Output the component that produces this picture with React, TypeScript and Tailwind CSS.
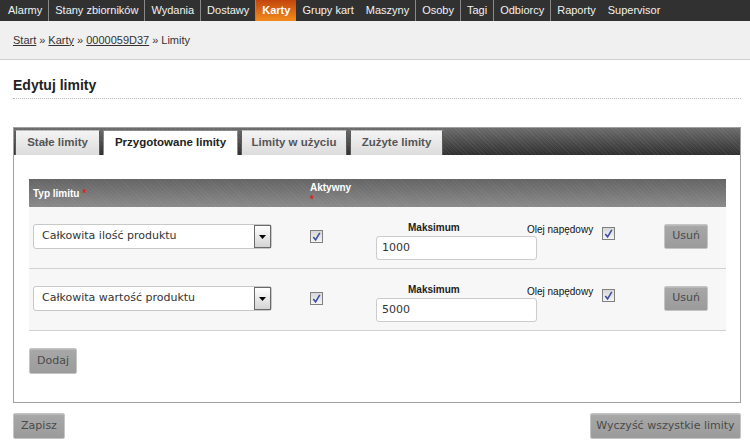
import React from "react";

const navItems: { label: string; sep: boolean; active?: boolean; first?: boolean }[] = [
  { label: "Alarmy", sep: true, first: true },
  { label: "Stany zbiorników", sep: true },
  { label: "Wydania", sep: true },
  { label: "Dostawy", sep: true },
  { label: "Karty", sep: false, active: true },
  { label: "Grupy kart", sep: false },
  { label: "Maszyny", sep: true },
  { label: "Osoby", sep: true },
  { label: "Tagi", sep: true },
  { label: "Odbiorcy", sep: true },
  { label: "Raporty", sep: false },
  { label: "Supervisor", sep: false },
];

function Checkbox() {
  return (
    <svg width="13" height="13" viewBox="0 0 13 13" className="block">
      <defs>
        <linearGradient id="cbg" x1="0" y1="0" x2="0" y2="1">
          <stop offset="0" stopColor="#d6d6d6" />
          <stop offset="1" stopColor="#f6f6f6" />
        </linearGradient>
      </defs>
      <rect x="0.5" y="0.5" width="12" height="12" fill="url(#cbg)" stroke="#808080" />
      <path d="M3.3 6.9 L5.6 9.8 L9.8 2.9" fill="none" stroke="#3a4fa6" strokeWidth="1.6" />
    </svg>
  );
}

function Select({ value }: { value: string }) {
  return (
    <div className="flex h-[25px] w-[239px] items-center rounded-[3px] border border-[#c8c8c8] bg-white">
      <span className="flex-1 pl-[8px] font-['DejaVu_Sans',sans-serif] text-[11px] text-[#333]">{value}</span>
      <div className="flex h-[23px] w-[17px] items-center justify-center border border-[#6a6a6a] bg-[linear-gradient(#ffffff,#d4d4d4)]">
        <svg width="7" height="4" viewBox="0 0 7 4" className="block">
          <path d="M0 0 H7 L3.5 4 Z" fill="#000" />
        </svg>
      </div>
    </div>
  );
}

const btn =
  "flex items-center justify-center rounded-[2px] border border-[#c4c4c4] bg-[linear-gradient(#a8a8a8,#9b9b9b)] font-['DejaVu_Sans',sans-serif] text-[11px] text-[#4a4a4a] shadow-[inset_0_1px_0_rgba(255,255,255,0.2)]";

function Row({ type, max }: { type: string; max: string }) {
  return (
    <div className="flex h-[62px] items-start border-b border-[#d2d2d2] bg-[#f7f7f7]">
      <div className="ml-[4px] mt-[17px]">
        <Select value={type} />
      </div>
      <div className="ml-[38px] mt-[23px]">
        <Checkbox />
      </div>
      <div className="ml-[53px] mt-[15px] flex w-[161px] flex-col">
        <div className="pl-[32px] text-[10px] font-bold leading-[12px] text-[#222]">Maksimum</div>
        <div className="mt-[2px] flex h-[24px] items-center rounded-[3px] border border-[#cccccc] bg-white pl-[5px] font-['DejaVu_Sans',sans-serif] text-[11px] text-[#333]">
          {max}
        </div>
      </div>
      <div className="-ml-[10px] mt-[17px] flex items-start">
        <span className="text-[10px] leading-[12px] text-[#111]">Olej napędowy</span>
        <div className="ml-[9px] mt-[3px]">
          <Checkbox />
        </div>
      </div>
      <div className={`ml-auto mr-[18px] mt-[17px] h-[25px] w-[44px] ${btn}`}>Usuń</div>
    </div>
  );
}

export default function App() {
  return (
    <div className="h-[442px] w-[750px] overflow-hidden bg-white font-['Liberation_Sans',Arial,sans-serif] text-[#333]">
      <nav className="flex h-[21px] bg-[#313131] text-[11px] text-[#f2f2f2]">
        {navItems.map((it) => (
          <div
            key={it.label}
            className={`flex items-center ${it.first ? "pl-[8px] pr-[6px]" : "px-[6px]"} ${
              it.sep ? "border-r border-[#8a8a8a]" : ""
            } ${it.active ? "bg-[linear-gradient(#c2460c,#f28b1d)] font-bold text-white" : ""}`}
          >
            {it.label}
          </div>
        ))}
      </nav>

      <div className="flex h-[39px] items-center border-b border-[#cfcfcf] bg-[#f0f0f0] px-[13px] text-[11px] text-[#333]">
        <span className="underline">Start</span>
        <span className="mx-[3px]">»</span>
        <span className="underline">Karty</span>
        <span className="mx-[3px]">»</span>
        <span className="underline">0000059D37</span>
        <span className="mx-[3px]">»</span>
        <span>Limity</span>
      </div>

      <h1 className="ml-[13px] mt-[17px] w-[728px] border-b border-dotted border-[#bbbbbb] pb-[4px] text-[14px] font-bold leading-[17px] text-[#222]">
        Edytuj limity
      </h1>

      <div className="ml-[13px] mt-[28px] w-[728px] border border-[#a0a0a0]">
        <div className="flex h-[27px] items-end gap-[3px] bg-[repeating-linear-gradient(45deg,rgba(255,255,255,0.05)_0px,rgba(255,255,255,0.05)_1px,transparent_1px,transparent_3px),linear-gradient(#6c6c6c,#2f2f2f)] pl-[1px]">
          <div className="flex h-[25px] w-[85px] items-center justify-center border-x border-t border-[#5a5a5a] border-t-[#bdbdbd] bg-[linear-gradient(#f4f4f4,#dcdcdc)] text-[11.5px] font-bold text-[#555]">
            Stałe limity
          </div>
          <div className="flex h-[25px] w-[135px] items-center justify-center border-x border-t border-[#8a8a8a] bg-white text-[11.5px] font-bold text-[#222]">
            Przygotowane limity
          </div>
          <div className="flex h-[25px] w-[106px] items-center justify-center border-x border-t border-[#5a5a5a] border-t-[#bdbdbd] bg-[linear-gradient(#f4f4f4,#dcdcdc)] text-[11.5px] font-bold text-[#555]">
            Limity w użyciu
          </div>
          <div className="flex h-[25px] w-[93px] items-center justify-center border-x border-t border-[#5a5a5a] border-t-[#bdbdbd] bg-[linear-gradient(#f4f4f4,#dcdcdc)] text-[11.5px] font-bold text-[#555]">
            Zużyte limity
          </div>
        </div>

        <div className="pb-[28px] pl-[15px] pr-[14px] pt-[24px]">
          <div className="flex h-[28px] bg-[repeating-linear-gradient(45deg,rgba(255,255,255,0.04)_0px,rgba(255,255,255,0.04)_1px,transparent_1px,transparent_3px),linear-gradient(#646464,#8a8a8a)] text-[10px] font-bold text-white">
            <div className="flex w-[281px] items-center pl-[4px]">
              Typ limitu <span className="ml-[3px] text-[#e02020]">*</span>
            </div>
            <div className="flex flex-col pt-[3px] leading-[12px]">
              <span>Aktywny</span>
              <span className="text-[#e02020]">*</span>
            </div>
          </div>
          <Row type="Całkowita ilość produktu" max="1000" />
          <Row type="Całkowita wartość produktu" max="5000" />
          <div className={`mt-[17px] h-[26px] w-[48px] ${btn}`}>Dodaj</div>
        </div>
      </div>

      <div className="mt-[10px] flex w-[741px] justify-between pl-[13px]">
        <div className={`h-[26px] w-[52px] ${btn}`}>Zapisz</div>
        <div className={`h-[26px] w-[151px] ${btn}`}>Wyczyść wszystkie limity</div>
      </div>
    </div>
  );
}
